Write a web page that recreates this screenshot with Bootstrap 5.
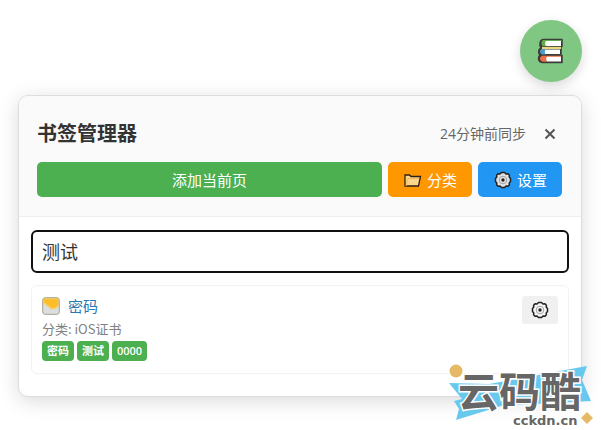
<!DOCTYPE html>
<html lang="zh-CN">
<head>
<meta charset="utf-8">
<meta name="viewport" content="width=device-width, initial-scale=1">
<title>书签管理器</title>
<link href="https://cdn.jsdelivr.net/npm/bootstrap@5.3.0/dist/css/bootstrap.min.css" rel="stylesheet">
<style>
body { font-family: "Open Sans", "Noto Sans CJK SC", sans-serif; background: #fff; color: #333; overflow-x: hidden; }
.page { padding: 20px 19px 12px 18px; }
.fab { width: 62px; height: 62px; background: #81c784; box-shadow: 0 4px 12px rgba(0,0,0,.15); margin-bottom: 13px; }
.panel { border: 1px solid #ddd; border-radius: 10px; box-shadow: 0 4px 20px rgba(0,0,0,.15); overflow: hidden; }
.panel-head { background: #fafafa; border-bottom: 1px solid #eee; padding: 22px 19px 19px 18px; }
.panel-title { font-size: 20px; line-height: 32px; font-weight: 700; }
.sync { font-size: 14px; line-height: 20px; color: #666; }
.close-btn { width: 24px; height: 24px; color: #555; }
.action { height: 35px; border: 0; border-radius: 5px; color: #fff; font-size: 15px; line-height: 20px; padding: 0 15px; white-space: nowrap; }
.actions { gap: 6px; margin-top: 12px; }
.act-add { background: #4caf50; }
.act-cat { background: #ff9800; }
.act-set { background: #2196f3; }
.panel-body { padding: 13px 12px 22px; }
.search { height: 43px; border: 2px solid #101010; border-radius: 6px; padding: 0 9px 2px; font-size: 18px; color: #333; }
.search:focus { border-color: #101010; box-shadow: none; }
.entry { border: 1px solid #f2f2f2; border-radius: 6px; margin-top: 12px; padding: 10px 10px 12px; }
.entry-link { font-size: 15px; line-height: 20px; color: #2a78b0; }
.entry-cat { font-family: "Noto Sans CJK SC", sans-serif; font-size: 13px; line-height: 20px; color: #808080; margin-top: 3px; }
.tags { gap: 3px; margin-top: 2px; }
.tag { background: #4caf50; color: #fff; border-radius: 4px; padding: 0 5px; font-size: 11px; line-height: 20px; font-weight: 600; }
.gear-btn { width: 36px; height: 28px; background: #f0f0f0; border-radius: 3px; }
.stage { min-height: 100vh; }
.brand-mark { right: 8px; bottom: 0; width: 150px; height: 80px; pointer-events: none; }
.brand-name { font: 700 41px "Noto Sans CJK SC", sans-serif; fill: #666; stroke: #fff; stroke-width: 3px; paint-order: stroke; }
.brand-url { font: 700 13px "DejaVu Sans", sans-serif; fill: #666; stroke: #fff; stroke-width: 2px; paint-order: stroke; }
</style>
<script src="https://cdn.jsdelivr.net/npm/bootstrap@5.3.0/dist/js/bootstrap.bundle.min.js"></script>
</head>
<body>
<svg class="d-none">
  <symbol id="gear" viewBox="0 0 18 18">
    <path d="M7.500 1.500h3L12 3l2-.2 1.400 1.500L15.200 6l1.300 1.500v3L15.200 12l.2 1.800-1.400 1.500-2-.3-1.500 1.500h-3L6 15l-2 .3-1.400-1.500.2-1.800-1.300-1.500v-3L2.800 6l-.2-1.700L4 2.800 6 3z" stroke="#222" stroke-width="1.500" stroke-linejoin="round"/>
    <circle cx="9" cy="9" r="3.800" fill="none" stroke="#999" stroke-width=".9"/>
    <circle cx="9" cy="9" r="1.700" fill="#222"/>
  </symbol>
</svg>
<div class="stage position-relative">
<main class="page">
  <div class="d-flex justify-content-end">
    <button type="button" class="fab btn rounded-circle border-0 p-0 d-flex align-items-center justify-content-center" aria-label="书签">
      <svg width="28" height="28" viewBox="0 0 28 28" stroke-linejoin="round" aria-hidden="true">
        <path d="M6 2.500h19v7H24v9h1v7H5.500Q1.500 25 1.500 21.500q0-2.500 1.700-3.500Q1 16.500 2 13q.5-1.500 2-2Q2.500 9.500 3 6q.5-3 3-3.500z" fill="#3b3d38" stroke="#3b3d38" stroke-width="1.500"/>
        <path d="M6 3h18.500v1.500H10Q7.500 6 9 9H5.500Q3 5 6 3z" fill="#63ac4c"/>
        <path d="M9 4H24v5H9Q7 6.500 9 4z" fill="#fff"/>
        <path d="M5 9.800h19V12H5z" fill="#e6d67c"/>
        <path d="M4.500 12H9v5.500H5q-4-2.500-.5-5.500z" fill="#4d9bc7"/>
        <path d="M8.500 12.500H23v4.500H8.500q-1.500-2.500 0-4.500z" fill="#fff"/>
        <path d="M5 18.800h19V20H10q-2 2 0 4.800H5.500q-5-3-.5-6z" fill="#ef7045"/>
        <path d="M10 19.800h14v4.700H10Q8 22 10 19.800z" fill="#fff"/>
      </svg>
    </button>
  </div>
  <section class="panel bg-white">
    <header class="panel-head">
      <div class="d-flex align-items-center">
        <h1 class="panel-title mb-0 me-auto">书签管理器</h1>
        <span class="sync me-2 pe-1">24分钟前同步</span>
        <button type="button" class="close-btn btn border-0 p-0 d-flex align-items-center justify-content-center" aria-label="关闭">
          <svg width="12" height="12" viewBox="0 0 12 12" aria-hidden="true"><path d="M1.500 1.500l9 9m0-9l-9 9" stroke="currentColor" stroke-width="2"/></svg>
        </button>
      </div>
      <div class="actions d-flex">
        <button type="button" class="action act-add flex-grow-1">添加当前页</button>
        <button type="button" class="action act-cat d-flex align-items-center gap-1">
          <svg width="20" height="18" viewBox="0 0 20 18" aria-hidden="true"><path d="M2 15V4h4.500L8 5.500h9.500L15.500 15z" fill="#fdd68c" stroke="#2b2115" stroke-width="1.300"/><path d="M3 15L5 7.500h11" fill="none" stroke="#f4b95f"/></svg>分类</button>
        <button type="button" class="action act-set d-flex align-items-center gap-1">
          <svg width="20" height="18" fill="#e2e2e2" aria-hidden="true"><use href="#gear"/></svg>设置</button>
      </div>
    </header>
    <div class="panel-body">
      <input type="text" class="search form-control" value="测试" aria-label="搜索书签">
      <article class="entry d-flex align-items-start">
        <div class="me-auto">
          <div class="d-flex align-items-center">
            <svg class="me-2" width="18" height="18" viewBox="0 0 18 18" aria-hidden="true"><rect x=".7" y=".7" width="16.600" height="16.600" rx="2.500" fill="#dcdfe0" stroke="#a7a18b"/><path d="M1.500 1.500h15v8L13 12H9L1.500 6z" fill="#fdbe2c"/><path d="M2 6l7 5.500h4L16 9" fill="none" stroke="#f4cf77" stroke-width="1.500"/></svg>
            <a href="#" class="entry-link text-decoration-none">密码</a>
          </div>
          <div class="entry-cat">分类: iOS证书</div>
          <div class="tags d-flex"><span class="tag">密码</span><span class="tag">测试</span><span class="tag">0000</span></div>
        </div>
        <button type="button" class="gear-btn btn border-0 p-0 d-flex align-items-center justify-content-center" aria-label="编辑书签">
          <svg width="18" height="18" fill="#f5f5f5" aria-hidden="true"><use href="#gear"/></svg>
        </button>
      </article>
    </div>
  </section>
</main>
<svg class="brand-mark position-absolute" viewBox="0 -12 150 80" role="img" aria-label="云码酷 cckdn.cn">
  <path d="M6 21l40 1 98-18-5 14 9 21-90 5-45 14 3-11-5-8 8-2z" fill="#68c8ed"/>
  <circle cx="13" cy="9" r="6.500" fill="#e5b965"/>
  <path d="M144 50l6 6-6 6-6-6z" fill="#e5b965"/>
  <text class="brand-name" x="15" y="45">云码酷</text>
  <text class="brand-url" x="70" y="63">cckdn.cn</text>
</svg>
</div>
</body>
</html>
